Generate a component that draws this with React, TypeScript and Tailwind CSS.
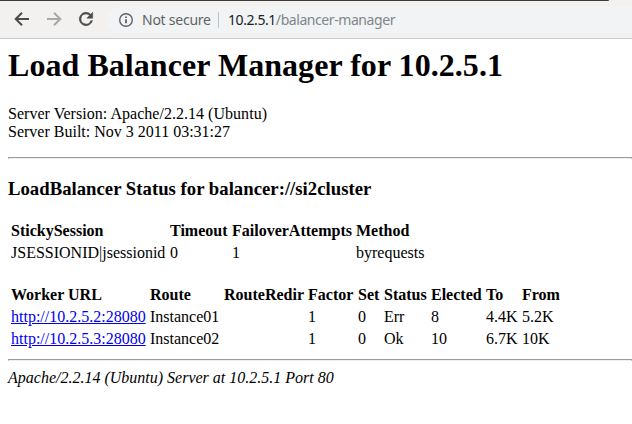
const stickyColumns = [
  { label: "StickySession", width: "w-[157px]" },
  { label: "Timeout", width: "w-[60px]" },
  { label: "FailoverAttempts", width: "w-[122px]" },
  { label: "Method", width: "w-[72px]" },
];

const workerColumns = [
  { label: "Worker URL", width: "w-[137px]" },
  { label: "Route", width: "w-[72px]" },
  { label: "RouteRedir", width: "w-[82px]" },
  { label: "Factor", width: "w-[48px]" },
  { label: "Set", width: "w-[24px]" },
  { label: "Status", width: "w-[45px]" },
  { label: "Elected", width: "w-[53px]" },
  { label: "To", width: "w-[34px]" },
  { label: "From", width: "w-[42px]" },
];

const workers = [
  ["http://10.2.5.2:28080", "Instance01", "", "1", "0", "Err", "8", "4.4K", "5.2K"],
  ["http://10.2.5.3:28080", "Instance02", "", "1", "0", "Ok", "10", "6.7K", "10K"],
];

type Column = { label: string; width: string };

function DataTable({ columns, rows, tableClass }: { columns: Column[]; rows: string[][]; tableClass: string }) {
  return (
    <table className={`table-fixed border-separate border-spacing-[2px] whitespace-nowrap ${tableClass}`}>
      <thead>
        <tr>
          {columns.map((c) => (
            <th key={c.label} className={`p-px text-left font-bold ${c.width}`}>{c.label}</th>
          ))}
        </tr>
      </thead>
      <tbody>
        {rows.map((row) => (
          <tr key={row[0]}>
            {row.map((cell, i) => (
              <td key={i} className="p-px">
                {cell.startsWith("http") ? <a href={cell} className="text-[#0000ee] underline">{cell}</a> : cell}
              </td>
            ))}
          </tr>
        ))}
      </tbody>
    </table>
  );
}

export default function App() {
  return (
    <div className="h-[424px] w-[632px] overflow-hidden bg-white text-black">
      <header className="h-[39px] border-b border-[#cacaca] bg-[#f2f1f0] font-['Noto_Sans',sans-serif] text-sm">
        <div className="h-px w-[609px] rounded-tr-sm bg-[#3c3b37]" />
        <div className="flex h-[37px] items-center">
          <svg className="mb-px ml-[13px] shrink-0" width="18" height="18" viewBox="0 0 18 18" fill="none" stroke="#4b4b4b" strokeWidth="2"><path d="M16 9H3.5M9 2.7L2.7 9L9 15.3" /></svg>
          <svg className="mb-px ml-[14px] shrink-0" width="18" height="18" viewBox="0 0 18 18" fill="none" stroke="#a9a8a7" strokeWidth="2"><path d="M2 9h12.5M9 2.7L15.3 9L9 15.3" /></svg>
          <svg className="mb-px ml-[13px] shrink-0" width="20" height="20" viewBox="0 0 24 24" fill="#4b4b4b" stroke="#4b4b4b" strokeWidth="0.7"><path d="M17.65 6.35A8 8 0 1 0 19.73 14h-2.08A6 6 0 1 1 12 6c1.66 0 3.14.69 4.22 1.78L13 11h7V4z" /></svg>
          <div className="ml-[11px] flex h-7 flex-1 items-center rounded-l-full bg-[#f1f3f4] pl-[11px]">
            <svg className="mt-px shrink-0" width="16" height="16" viewBox="0 0 16 16" fill="none" stroke="#5f6368" strokeWidth="1.4"><circle cx="8" cy="8" r="6.3" /><path d="M8 7.2v4M8 4.4v1.5" strokeWidth="1.8" /></svg>
            <span className="ml-[8px] w-[69px] shrink-0 whitespace-nowrap tracking-[-0.25px] text-[#5f6368]">Not secure</span>
            <span className="ml-[7px] h-4 w-px bg-[#bdc1c6]" />
            <span className="ml-[9px] whitespace-nowrap tracking-[-0.43px] text-[#202124]">10.2.5.1<span className="text-[#80868b]">/balancer-manager</span></span>
          </div>
        </div>
      </header>
      <main className="pl-2 font-['Liberation_Serif',serif] text-base leading-[18px]">
        <h1 className="pt-2 text-[32px] leading-[37px] font-bold tracking-[0.05px]">Load Balancer Manager for 10.2.5.1</h1>
        <p className="mt-[21px]"><span className="tracking-[0.03px]">Server Version: Apache/2.2.14 (Ubuntu)</span><br />Server Built: Nov 3 2011 03:31:27</p>
        <hr className="mt-4 h-[2px] border border-[#9a9a9a] border-b-[#eee]" />
        <h3 className="mt-[19px] text-[18.72px] leading-[22px] font-bold tracking-[0.02px]">LoadBalancer Status for balancer://si2cluster</h3>
        <DataTable
          tableClass="mt-[19px] w-[421px]"
          columns={stickyColumns}
          rows={[["JSESSIONID|jsessionid", "0", "1", "byrequests"]]}
        />
        <DataTable tableClass="mt-[18px] w-[557px]" columns={workerColumns} rows={workers} />
        <hr className="mt-2 h-[2px] border border-[#9a9a9a] border-b-[#eee]" />
        <address className="mt-2 italic">Apache/2.2.14 (Ubuntu) Server at 10.2.5.1 Port 80</address>
      </main>
    </div>
  );
}
